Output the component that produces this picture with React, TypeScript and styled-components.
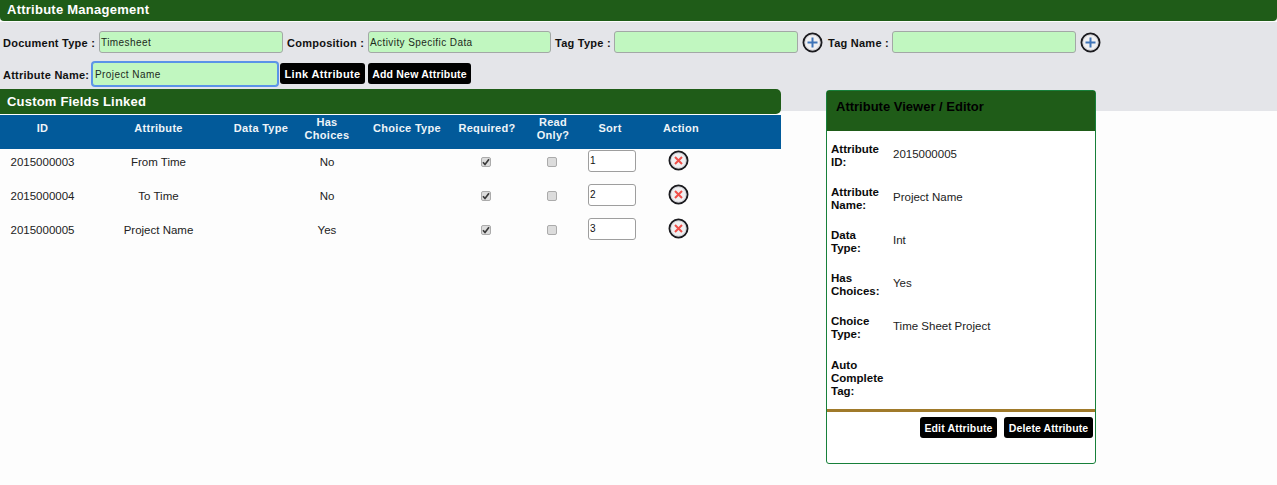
import React from "react";
import styled, { createGlobalStyle } from "styled-components";

const Global = createGlobalStyle`
  html, body { margin: 0; padding: 0; background: #fdfdfd; }
  body { font-family: "Liberation Sans", Arial, sans-serif; color: #111; overflow: hidden; }
  * { box-sizing: border-box; }
`;

const green = "#1f5c18";

const Page = styled.div`
  width: 1277px;
  height: 485px;
`;
const TopBar = styled.div`
  height: 21px;
  margin-bottom: 1px;
  background: ${green};
  border-radius: 0 0 4px 4px;
  color: #fff;
  font-size: 13px;
  font-weight: 700;
  line-height: 19px;
  letter-spacing: 0.25px;
  padding-left: 7px;
`;
const FormPanel = styled.div`
  height: 89px;
  background: #e4e5e9;
  padding: 9px 0 0 3px;
`;
const FormRow = styled.div<{ $mb?: number }>`
  display: flex;
  align-items: center;
  height: ${(p) => (p.$mb ? "22px" : "24px")};
  margin-bottom: ${(p) => p.$mb ?? 0}px;
`;
const Label = styled.label<{ $w: number; $ml?: number }>`
  width: ${(p) => p.$w}px;
  margin-left: ${(p) => p.$ml ?? 0}px;
  padding-top: 2px;
  flex: none;
  font-size: 11px;
  font-weight: 700;
  letter-spacing: 0.25px;
  white-space: nowrap;
`;
const Field = styled.div<{ $w: number; $focus?: boolean }>`
  width: ${(p) => p.$w}px;
  flex: none;
  height: ${(p) => (p.$focus ? "24px" : "22px")};
  background: #c1f7c0;
  border: 1px solid ${(p) => (p.$focus ? "#5b93e8" : "#a3a8a6")};
  box-shadow: ${(p) => (p.$focus ? "0 0 0 1px #5b93e8" : "none")};
  border-radius: 3px;
  font-size: 10px;
  letter-spacing: 0.42px;
  line-height: ${(p) => (p.$focus ? "23px" : "21px")};
  padding-left: ${(p) => (p.$focus ? "2px" : "1px")};
  color: #1c2a1c;
  white-space: nowrap;
`;
const IconSlot = styled.span<{ $ml: number; $w: number }>`
  display: flex;
  flex: none;
  margin-left: ${(p) => p.$ml}px;
  width: ${(p) => p.$w}px;
`;
const BlackButton = styled.button<{ $w: number; $ml?: number; $ls: number; $fs: number }>`
  width: ${(p) => p.$w}px;
  height: 21px;
  margin-left: ${(p) => p.$ml ?? 0}px;
  margin-bottom: 1px;
  padding: 0;
  flex: none;
  background: #000;
  border: none;
  border-radius: 3px;
  color: #fff;
  font-family: inherit;
  font-size: ${(p) => p.$fs}px;
  font-weight: 700;
  letter-spacing: ${(p) => p.$ls}px;
  white-space: nowrap;
`;
const Main = styled.div`
  display: grid;
  grid-template-columns: 781px 270px;
  column-gap: 45px;
  margin-top: -22px;
  align-items: start;
`;
const LeftCol = styled.div`
  display: flex;
  flex-direction: column;
`;
const SectionBar = styled.div`
  height: 25px;
  margin-bottom: 1px;
  background: ${green};
  border-radius: 0 5px 5px 0;
  color: #fff;
  font-size: 13px;
  font-weight: 700;
  letter-spacing: 0.2px;
  line-height: 25px;
  padding-left: 7px;
`;
const Table = styled.table`
  width: 781px;
  table-layout: fixed;
  border-collapse: collapse;
`;
const Th = styled.th<{ $w?: number }>`
  width: ${(p) => (p.$w ? `${p.$w}px` : "auto")};
  height: 34px;
  padding: 0 0 7px;
  background: #025a9a;
  color: #eef4f8;
  font-size: 11px;
  font-weight: 700;
  letter-spacing: 0.3px;
  line-height: 13px;
  text-align: center;
  vertical-align: middle;
`;
const Td = styled.td<{ $pt?: number }>`
  height: 34px;
  padding: ${(p) => p.$pt ?? 6}px 0 0;
  font-size: 11.5px;
  line-height: 14px;
  color: #222;
  text-align: center;
  vertical-align: top;
`;
const Check = styled.span`
  display: inline-flex;
  align-items: center;
  justify-content: center;
  width: 10px;
  height: 10px;
  margin: 2px 2px 0 0;
  background: #dcdcdc;
  border: 1px solid #ababab;
  border-radius: 2px;
  vertical-align: top;
`;
const SortInput = styled.div`
  width: 48px;
  height: 22px;
  margin-left: 6px;
  background: #fff;
  border: 1px solid #9e9e9e;
  border-radius: 3px;
  font-size: 10px;
  line-height: 20px;
  padding-left: 1px;
  text-align: left;
  color: #111;
`;
const ActionSlot = styled.span`
  display: flex;
  justify-content: center;
  padding-right: 6px;
`;
const Viewer = styled.aside`
  margin-top: 1px;
  height: 374px;
  background: #fff;
  border: 1px solid #17803a;
  border-radius: 3px;
  display: flex;
  flex-direction: column;
`;
const ViewerHead = styled.div`
  height: 40px;
  flex: none;
  background: ${green};
  color: #000;
  font-size: 13px;
  font-weight: 700;
  line-height: 32px;
  padding-left: 9px;
`;
const ViewerBody = styled.div`
  height: 278px;
  flex: none;
  padding: 12px 0 0 4px;
`;
const InfoRow = styled.div`
  display: grid;
  grid-template-columns: 62px 1fr;
  align-items: center;
  height: 26px;
  margin-bottom: 17px;
  &:last-child {
    height: 27px;
    padding-top: 1px;
    margin-bottom: 0;
  }
`;
const InfoLabel = styled.div`
  max-width: 55px;
  font-size: 11.5px;
  font-weight: 700;
  line-height: 13px;
  color: #0b0b0b;
`;
const InfoValue = styled.div`
  padding-bottom: 4px;
  font-size: 11.5px;
  color: #222;
`;
const Rule = styled.div`
  height: 3px;
  flex: none;
  background: #a07a2a;
`;
const ViewerActions = styled.div`
  display: flex;
  justify-content: flex-end;
  gap: 7px;
  padding: 5px 2px 0 0;
`;

const RoundIcon = ({ kind }: { kind: "plus" | "x" }) => (
  <svg width="21" height="21" viewBox="0 0 21 21" aria-hidden="true">
    <circle cx="10.5" cy="10.5" r="9" fill="#f0f0f2" stroke="#1b1b1f" strokeWidth="2" />
    <circle cx="10.5" cy="10.5" r="7.6" fill="none" stroke="#c9c9cf" strokeWidth="0.8" />
    {kind === "plus" ? (
      <path d="M10.5 5.5v10M5.5 10.5h10" stroke="#3f74b8" strokeWidth="2" />
    ) : (
      <path d="M7 7l7 7M14 7l-7 7" stroke="#f0504a" strokeWidth="2" />
    )}
  </svg>
);

const Tick = () => (
  <svg width="8" height="8" viewBox="0 0 8 8" aria-hidden="true">
    <path d="M1 4.2l2 2.3L7 1.2" fill="none" stroke="#3a3a3a" strokeWidth="1.7" />
  </svg>
);

const rows = [
  { id: "2015000003", name: "From Time", choices: "No", sort: 1 },
  { id: "2015000004", name: "To Time", choices: "No", sort: 2 },
  { id: "2015000005", name: "Project Name", choices: "Yes", sort: 3 },
];

const info = [
  ["Attribute ID:", "2015000005"],
  ["Attribute Name:", "Project Name"],
  ["Data Type:", "Int"],
  ["Has Choices:", "Yes"],
  ["Choice Type:", "Time Sheet Project"],
  ["Auto Complete Tag:", ""],
];

export default function App() {
  return (
    <Page>
      <Global />
      <TopBar>Attribute Management</TopBar>
      <FormPanel>
        <FormRow $mb={9}>
          <Label $w={96}>Document Type :</Label>
          <Field $w={184}>Timesheet</Field>
          <Label $w={81} $ml={4}>Composition :</Label>
          <Field $w={183}>Activity Specific Data</Field>
          <Label $w={59} $ml={4}>Tag Type :</Label>
          <Field $w={184} />
          <IconSlot $ml={4} $w={21}><RoundIcon kind="plus" /></IconSlot>
          <Label $w={64} $ml={5}>Tag Name :</Label>
          <Field $w={184} />
          <IconSlot $ml={4} $w={21}><RoundIcon kind="plus" /></IconSlot>
        </FormRow>
        <FormRow>
          <Label $w={89}>Attribute Name:</Label>
          <Field $w={186} $focus>Project Name</Field>
          <BlackButton $w={85} $ml={2} $fs={11} $ls={0.35}>Link Attribute</BlackButton>
          <BlackButton $w={103} $ml={3} $fs={10.5} $ls={0.2}>Add New Attribute</BlackButton>
        </FormRow>
      </FormPanel>
      <Main>
        <LeftCol>
          <SectionBar>Custom Fields Linked</SectionBar>
          <Table>
            <thead>
              <tr>
                <Th $w={85}>ID</Th>
                <Th $w={147}>Attribute</Th>
                <Th $w={58}>Data Type</Th>
                <Th $w={74}>Has<br />Choices</Th>
                <Th $w={86}>Choice Type</Th>
                <Th $w={74}>Required?</Th>
                <Th $w={58}>Read<br />Only?</Th>
                <Th $w={56}>Sort</Th>
                <Th $w={86}>Action</Th>
                <Th />
              </tr>
            </thead>
            <tbody>
              {rows.map((r) => (
                <tr key={r.id}>
                  <Td>{r.id}</Td>
                  <Td>{r.name}</Td>
                  <Td />
                  <Td>{r.choices}</Td>
                  <Td />
                  <Td><Check><Tick /></Check></Td>
                  <Td><Check /></Td>
                  <Td $pt={1}><SortInput>{r.sort}</SortInput></Td>
                  <Td $pt={1}><ActionSlot><RoundIcon kind="x" /></ActionSlot></Td>
                  <Td />
                </tr>
              ))}
            </tbody>
          </Table>
        </LeftCol>
        <Viewer>
          <ViewerHead>Attribute Viewer / Editor</ViewerHead>
          <ViewerBody>
            {info.map(([k, v]) => (
              <InfoRow key={k}>
                <InfoLabel>{k}</InfoLabel>
                <InfoValue>{v}</InfoValue>
              </InfoRow>
            ))}
          </ViewerBody>
          <Rule />
          <ViewerActions>
            <BlackButton $w={77} $fs={10.5} $ls={0.15}>Edit Attribute</BlackButton>
            <BlackButton $w={89} $fs={10.5} $ls={0.1}>Delete Attribute</BlackButton>
          </ViewerActions>
        </Viewer>
      </Main>
    </Page>
  );
}
